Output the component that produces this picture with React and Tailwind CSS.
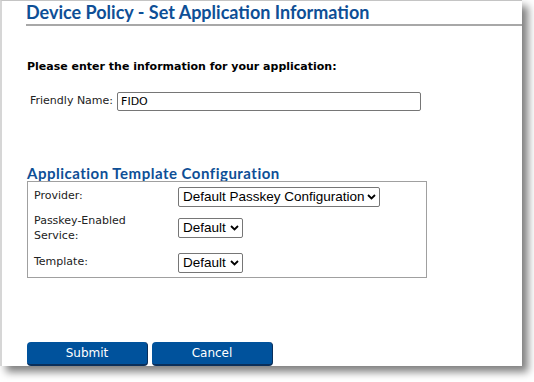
export default function App() {
  const verdana = { fontFamily: '"DejaVu Sans", Verdana, sans-serif' };
  return (
    <div className="w-[534px] h-[382px] bg-white overflow-hidden">
      <div className="w-[522px] h-[366px] bg-white border-t border-t-[#c4c4c4] border-l-2 border-l-[#d6d6d6] shadow-[6px_6px_8px_rgba(0,0,0,0.5)] flex flex-col">
        <div className="ml-[24px] h-[25px] border-b-2 border-b-[#a8a8a8] flex items-end pb-[2px]">
          <h1 className="text-[18px] leading-[20px] font-bold text-[#0e4f96]" style={{ fontFamily: 'Lato, sans-serif' }}>
            Device Policy - Set Application Information
          </h1>
        </div>
        <div className="ml-[25px] flex flex-col" style={verdana}>
          <p className="mt-[34px] text-[11px] leading-[14px] font-bold text-black">
            Please enter the information for your application:
          </p>
          <div className="mt-[18px] flex items-center">
            <label className="ml-[3px] text-[11px] text-[#222]">Friendly Name:</label>
            <input
              defaultValue="FIDO"
              className="ml-[4px] w-[304px] h-[19px] border border-[#767676] rounded-[2px] px-[3px] text-[11px] text-black outline-none"
              style={verdana}
            />
          </div>
          <h2 className="mt-[54px] text-[15px] leading-[16px] font-bold text-[#0e4f96] tracking-[0.5px]" style={{ fontFamily: 'Lato, sans-serif' }}>
            Application Template Configuration
          </h2>
          <div className="mt-[0px] w-[400px] h-[97px] border border-[#a0a0a0] pl-[4px] pt-[4px] flex flex-col">
            <div className="flex items-center h-[21px]">
              <span className="w-[146px] pl-[2px] text-[11px] text-[#222]">Provider:</span>
              <Select w="w-[202px]" label="Default Passkey Configuration" />
            </div>
            <div className="flex items-center mt-[6px] h-[30px]">
              <span className="w-[146px] pl-[2px] text-[11px] leading-[15px] text-[#222]">Passkey-Enabled<br />Service:</span>
              <Select w="w-[65px]" label="Default" />
            </div>
            <div className="flex items-center mt-[9px] h-[21px]">
              <span className="w-[146px] pl-[2px] text-[11px] text-[#222]">Template:</span>
              <Select w="w-[65px]" label="Default" />
            </div>
          </div>
          <div className="mt-[64px] flex gap-[4px]">
            <button className="w-[121px] h-[24px] rounded-[4px] bg-[#00529c] border-b-2 border-r border-[#0a2f5a] text-white text-[12px]" style={verdana}>Submit</button>
            <button className="w-[121px] h-[24px] rounded-[4px] bg-[#00529c] border-b-2 border-r border-[#0a2f5a] text-white text-[12px]" style={verdana}>Cancel</button>
          </div>
        </div>
      </div>
    </div>
  );
}

function Select({ w, label }) {
  return (
    <div className={`${w} h-[20px] border border-[#767676] rounded-[2px] flex items-center justify-between pl-[4px] pr-[3px] bg-white`}>
      <span className="whitespace-nowrap text-[13.5px] leading-[16px] text-black" style={{ fontFamily: '"Liberation Sans", Arial, sans-serif' }}>{label}</span>
      <svg width="9" height="6" viewBox="0 0 9 6" className="ml-[2px] shrink-0">
        <path d="M1 1 L4.5 4.5 L8 1" stroke="#000" strokeWidth="1.8" fill="none" />
      </svg>
    </div>
  );
}
